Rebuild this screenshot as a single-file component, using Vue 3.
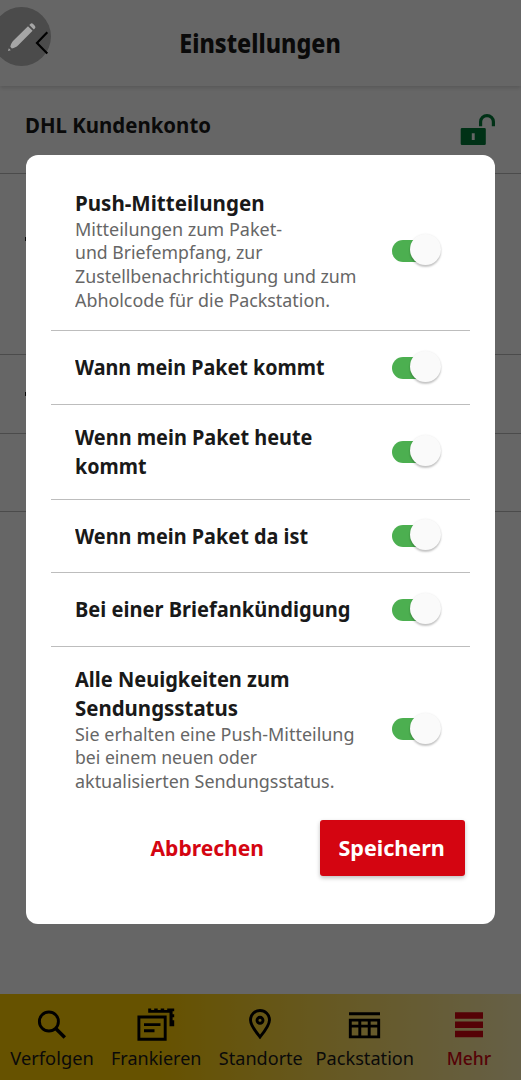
<script setup>
const vFit = {
  mounted(el, { value }) {
    const natural = el.getBoundingClientRect().width
    if (natural) el.style.transform = `scaleX(${value / natural})`
  },
}

const rows = [
  {
    title: [['Push-Mitteilungen', 189.5]],
    text: [
      ['Mitteilungen zum Paket-', 207],
      ['und Briefempfang, zur', 187.5],
      ['Zustellbenachrichtigung und zum', 281.5],
      ['Abholcode für die Packstation.', 255],
    ],
  },
  { title: [['Wann mein Paket kommt', 249.5]] },
  { title: [['Wenn mein Paket heute', 237.5], ['kommt', 71.5]] },
  { title: [['Wenn mein Paket da ist', 233]] },
  { title: [['Bei einer Briefankündigung', 275.5]] },
  {
    title: [['Alle Neuigkeiten zum', 214.5], ['Sendungsstatus', 163]],
    text: [
      ['Sie erhalten eine Push-Mitteilung', 279.5],
      ['bei einem neuen oder', 182],
      ['aktualisierten Sendungsstatus.', 259.5],
    ],
  },
]
</script>

<template>
  <div class="screen">
    <header class="bar">
      <svg class="back" viewBox="0 0 16 24"><path d="M13.300 1.300 3 12l10.300 10.500" /></svg>
      <h1 v-fit="161.5" class="line mid">Einstellungen</h1>
    </header>
    <main class="page">
      <section class="item account">
        <span v-fit="186" class="line">DHL Kundenkonto</span>
        <svg class="lock" viewBox="0 0 36 32">
          <path class="shackle" d="M20.600 12.200V7.800a6.400 6.200 0 0 1 12.800 0v4.400" />
          <path class="body" fill-rule="evenodd" d="M2 14h22.500a1.300 1.300 0 0 1 1.300 1.300v14.400a1.300 1.300 0 0 1-1.300 1.300H2a1.300 1.300 0 0 1-1.300-1.300V15.300a1.300 1.300 0 0 1 1.300-1.300zm9.800 5.200v6.800h2.900v-6.800z" />
        </svg>
      </section>
      <section class="item tall"><i class="edge"></i></section>
      <section class="item"><i class="edge"></i></section>
      <section class="item"></section>
    </main>
    <nav class="tabs">
      <a class="tab">
        <svg viewBox="0 0 40 36"><circle cx="16.900" cy="15.500" r="9.500" /><path class="thick" d="m23.500 22.300 9.300 9.300" /></svg>
        <span v-fit="83.5" class="line mid">Verfolgen</span>
      </a>
      <a class="tab">
        <svg viewBox="0 0 40 36">
          <path d="M2.900 11h26.300v22.200H2.900z" />
          <path d="M8 18.600h16.500M8 24.800h10.500" />
          <path class="solid" d="M12.200 2.500h3v1.500h3V2.500h3.500v1.500h3V2.500h3.500v1.500h3V2.500h7v2.700h-1.600v3h1.600v3h-1.600v3h1.600v6h-4.700V6.800H12.200z" />
        </svg>
        <span v-fit="90.5" class="line mid">Frankieren</span>
      </a>
      <a class="tab">
        <svg viewBox="0 0 40 36">
          <path d="M20 31C15.500 25.500 10.500 19.500 10.500 14a9.500 9.500 0 0 1 19 0C29.500 19.500 24.500 25.500 20 31z" />
          <circle cx="20" cy="14.300" r="3" />
        </svg>
        <span v-fit="84" class="line mid">Standorte</span>
      </a>
      <a class="tab">
        <svg viewBox="0 0 40 36">
          <path d="M4 7.700h31M5.300 14.100h28.400v16.800H5.300zM5.300 20.100h28.400M14.800 14v17M24.200 14v17" />
        </svg>
        <span v-fit="98.5" class="line mid">Packstation</span>
      </a>
      <a class="tab active">
        <svg viewBox="0 0 40 36"><path class="solid" d="M6 6.200h28v6.500H6zM6 15.500h28v6.400H6zM6 24.700h28v6.500H6z" /></svg>
        <span v-fit="44.5" class="line mid">Mehr</span>
      </a>
    </nav>

    <div class="scrim"></div>
    <div class="bubble">
      <svg viewBox="0 0 30 30">
        <path d="m1 29 .8-2.800 2 2zM3.300 24.800c.6-2.600 1.600-4.600 3.200-6.200L21 4.200l4.600 4.600L11.200 23.300c-1.700 1.700-3.800 2.800-6.300 3.300zM22.300 3l1-1a2 2 0 0 1 2.800 0l1.700 1.700a2 2 0 0 1 0 2.800l-1 1z" />
      </svg>
    </div>

    <div class="dialog">
      <ul class="rows">
        <li v-for="(row, i) in rows" :key="i" class="row">
          <div>
            <div v-for="t in row.title" :key="t[0]" class="title">
              <span v-fit="t[1]" class="line">{{ t[0] }}</span>
            </div>
            <div v-for="t in row.text" :key="t[0]" class="text">
              <span v-fit="t[1]" class="line">{{ t[0] }}</span>
            </div>
          </div>
          <span class="toggle"><i class="thumb"></i></span>
        </li>
      </ul>
      <div class="actions">
        <button class="btn"><span v-fit="113.5" class="line mid">Abbrechen</span></button>
        <button class="btn primary"><span v-fit="106.5" class="line mid">Speichern</span></button>
      </div>
    </div>
  </div>
</template>

<style>
body {
  margin: 0;
}
</style>

<style scoped>
* {
  box-sizing: border-box;
}
.screen {
  position: relative;
  display: flex;
  flex-direction: column;
  width: 521px;
  height: 1080px;
  overflow: hidden;
  background: #fff;
  color: #191919;
  font-family: 'Noto Sans', 'Open Sans', sans-serif;
}
.line {
  display: block;
  width: max-content;
  white-space: nowrap;
  transform-origin: left center;
}
.mid {
  transform-origin: center;
}
.bar {
  display: flex;
  align-items: center;
  justify-content: center;
  position: relative;
  height: 86px;
  box-shadow: 0 2px 4px rgba(0, 0, 0, 0.14);
}
.bar h1 {
  margin: 0;
  font-size: 26px;
  font-weight: 800;
  line-height: 36px;
}
.back {
  position: absolute;
  left: 34px;
  top: 31px;
  width: 16px;
  height: 24px;
  fill: none;
  stroke: #000;
  stroke-width: 2.200;
}
.page {
  flex: 1;
}
.item {
  display: flex;
  align-items: center;
  height: 78.500px;
  border-bottom: 1px solid #bbb;
}
.account {
  justify-content: space-between;
  height: 88px;
  padding: 0 25px 9px 24.500px;
  font-size: 21px;
  font-weight: 700;
}
.lock {
  width: 36px;
  height: 32px;
  margin-top: 9px;
}
.lock .body {
  fill: #007c39;
}
.lock .shackle {
  fill: none;
  stroke: #007c39;
  stroke-width: 3.200;
}
.tall {
  height: 181px;
  padding-bottom: 50px;
}
.edge {
  width: 2px;
  height: 4px;
  margin-left: 25px;
  background: #191919;
}
.tabs {
  display: grid;
  grid-template-columns: repeat(5, 104.200px);
  height: 86px;
  background: linear-gradient(90deg, #fc0 0%, #fc0 30%, #ffe57f 79%, #fff0b2 100%);
}
.tab {
  display: flex;
  flex-direction: column;
  align-items: center;
  padding-top: 12px;
  font-size: 18px;
  line-height: 26px;
  color: #191919;
}
.tab svg {
  width: 40px;
  height: 36px;
  margin-bottom: 3px;
  fill: none;
  stroke: #000;
  stroke-width: 2.900;
}
.tab .thick {
  stroke-width: 3.500;
}
.tab .solid {
  fill: #000;
  stroke: none;
}
.tab.active {
  color: #d40511;
  font-weight: 500;
}
.tab.active .solid {
  fill: #d40511;
}
.scrim {
  position: absolute;
  inset: 0;
  background: rgba(0, 0, 0, 0.6);
}
.bubble {
  position: absolute;
  left: -8px;
  top: 7px;
  width: 59px;
  height: 59px;
  border-radius: 50%;
  background: rgba(2, 2, 5, 0.270);
}
.bubble svg {
  position: absolute;
  left: 15px;
  top: 15px;
  width: 30px;
  height: 30px;
  fill: #a6a6a6;
}
.dialog {
  position: absolute;
  left: 26px;
  top: 155px;
  width: 469px;
  height: 769px;
  padding: 16px 25px 0;
  border-radius: 12px;
  background: #fff;
}
.rows {
  margin: 0;
  padding: 0;
  list-style: none;
}
.row {
  display: flex;
  align-items: center;
  justify-content: space-between;
  min-height: 73.800px;
  padding: 18px 29px 18px 24px;
  border-bottom: 1px solid #bdbdbd;
}
.row:last-child {
  border-bottom: 0;
}
.title {
  height: 28.800px;
  font-size: 20.500px;
  font-weight: 700;
  line-height: 28.800px;
}
.text {
  height: 23.600px;
  font-size: 18px;
  line-height: 23.600px;
  color: #666;
}
.toggle {
  position: relative;
  flex: none;
  width: 49px;
  height: 22px;
  border-radius: 11px;
  background: linear-gradient(90deg, #4caf50 32px, transparent 32px);
}
.thumb {
  position: absolute;
  right: 0.500px;
  top: -5.500px;
  width: 31px;
  height: 31px;
  border-radius: 50%;
  background: #fafafa;
  box-shadow: 0 2px 2px rgba(0, 0, 0, 0.220), 0 0 2px rgba(0, 0, 0, 0.080);
}
.actions {
  display: flex;
  justify-content: flex-end;
  gap: 40px;
  margin-top: 8px;
  padding-right: 5.500px;
}
.btn {
  display: flex;
  align-items: center;
  justify-content: center;
  width: 145px;
  height: 56px;
  margin: 0;
  padding: 0;
  border: 0;
  border-radius: 3px;
  background: none;
  color: #d40511;
  font: 700 20.500px 'Noto Sans', 'Open Sans', sans-serif;
}
.primary {
  background: #d40511;
  color: #fff;
  box-shadow: 0 2px 4px rgba(0, 0, 0, 0.250);
}
</style>
